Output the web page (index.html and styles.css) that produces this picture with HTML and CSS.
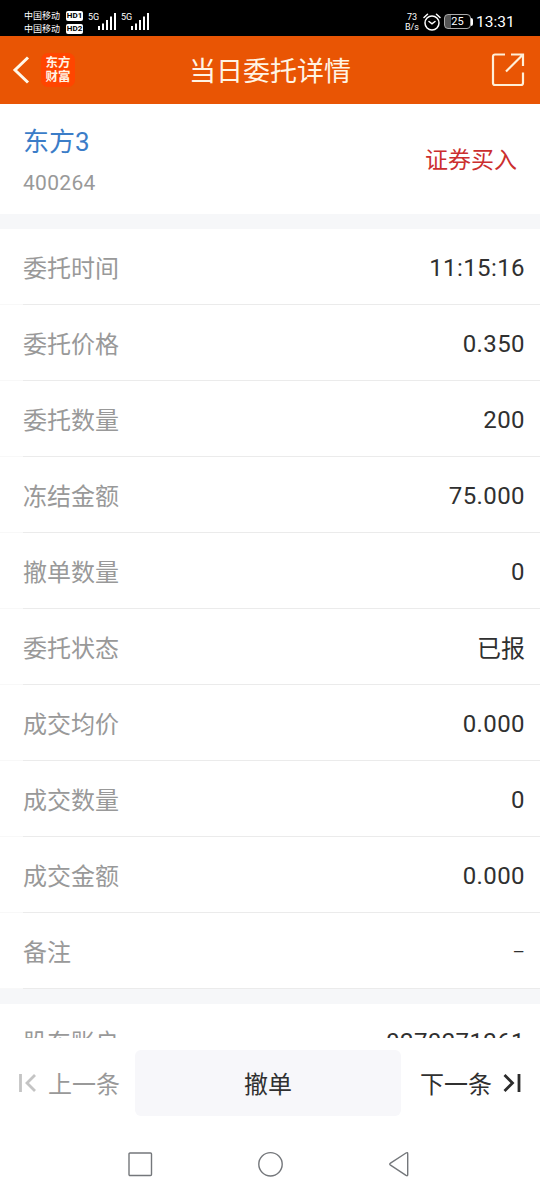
FILE: index.html
```html
<!DOCTYPE html>
<html lang="zh-CN">
<head>
    <meta charset="UTF-8">
    <meta name="viewport" content="width=device-width, initial-scale=1.0">
    <title>当日委托详情</title>
    <link rel="stylesheet" href="styles.css">
</head>
<body>

<div class="status-bar">
    <div class="carriers">
        <div>中国移动</div>
        <div>中国移动</div>
    </div>
    <div class="hd">
        <span>HD1</span>
        <span>HD2</span>
    </div>
    <div class="signal">
        <span>5G</span>
        <svg width="18" height="19" viewBox="0 0 18 19" stroke="#fff" stroke-width="2">
            <path d="M1 18v-4M5 18v-6.500M9 18v-10M13 18v-13.500M17 18V1"/>
        </svg>
    </div>
    <div class="signal">
        <span>5G</span>
        <svg width="18" height="19" viewBox="0 0 18 19" stroke="#fff" stroke-width="2">
            <path d="M1 18v-4M5 18v-6.500M9 18v-10M13 18v-13.500M17 18V1"/>
        </svg>
    </div>
    <div class="status-right">
        <div class="speed"><div>73</div><div>B/s</div></div>
        <svg class="alarm" width="18" height="18" viewBox="0 0 18 18" fill="none" stroke="#fff" stroke-width="1.500" stroke-linecap="round">
            <circle cx="9" cy="10" r="7"/>
            <path d="M1 4.500L4.500 1.300M17 4.500L13.500 1.300M6 8.500L9 10.800L12 8.500"/>
        </svg>
        <div class="battery"><span>25</span></div>
        <div class="clock">13:31</div>
    </div>
</div>

<header class="header">
    <svg class="back" width="18" height="28" viewBox="0 0 18 28" fill="none" stroke="#fff8ea" stroke-width="3">
        <path d="M16 1.500L3 14L16 26.500"/>
    </svg>
    <div class="logo"><div>东方</div><div>财富</div></div>
    <h1>当日委托详情</h1>
    <svg class="share" width="34" height="34" viewBox="0 0 34 34" fill="none" stroke="#ffefd8" stroke-width="2.200">
        <path d="M14 1.500H4a2 2 0 0 0-2 2V30a2 2 0 0 0 2 2H30a2 2 0 0 0 2-2V19.500M20 1.500H32V13M32 1.500L15 18.500"/>
    </svg>
</header>

<section class="stock">
    <div>
        <div class="stock-name">东方3</div>
        <div class="stock-code">400264</div>
    </div>
    <div class="side">证券买入</div>
</section>

<main class="details">
    <div class="row"><span>委托时间</span><b>11:15:16</b></div>
    <div class="row"><span>委托价格</span><b>0.350</b></div>
    <div class="row"><span>委托数量</span><b>200</b></div>
    <div class="row"><span>冻结金额</span><b>75.000</b></div>
    <div class="row"><span>撤单数量</span><b>0</b></div>
    <div class="row"><span>委托状态</span><b class="text">已报</b></div>
    <div class="row"><span>成交均价</span><b>0.000</b></div>
    <div class="row"><span>成交数量</span><b>0</b></div>
    <div class="row"><span>成交金额</span><b>0.000</b></div>
    <div class="row"><span>备注</span><b class="dash">–</b></div>
    <div class="gap"></div>
    <div class="row account"><span>股东账户</span><b>0270271261</b></div>
</main>

<footer class="actions">
    <div class="prev">
        <svg width="18" height="18" viewBox="0 0 18 18" fill="none" stroke="#c4c4c4" stroke-width="2.800">
            <path d="M1.500 0V18M16 1L8 9L16 17"/>
        </svg>
        <span>上一条</span>
    </div>
    <button class="cancel">撤单</button>
    <div class="next">
        <span>下一条</span>
        <svg width="18" height="18" viewBox="0 0 18 18" fill="none" stroke="#2c2c2c" stroke-width="2.800">
            <path d="M16 0V18M1.500 1L9.500 9L1.500 17"/>
        </svg>
    </div>
</footer>

<nav class="nav">
    <svg width="26" height="26" viewBox="0 0 26 26"><rect x="2" y="2" width="22.500" height="22.500" rx="1"/></svg>
    <svg width="26" height="26" viewBox="0 0 26 26"><circle cx="13.500" cy="13.300" r="11.700"/></svg>
    <svg width="26" height="26" viewBox="0 0 26 26"><path d="M3.500 12.200L19 2Q20.700 1 20.700 2.700V23.700Q20.700 25.400 19 24.400L3.500 14.200Q2 13.200 3.500 12.200Z"/></svg>
</nav>

</body>
</html>
```
FILE: styles.css
```css
* {box-sizing: border-box; margin: 0; padding: 0;}
body {
    font-family: Roboto, "Noto Sans CJK SC", sans-serif;
    background: #fff;
    color: #303030;
    width: 540px;
    height: 1200px;
    overflow: hidden;
    display: flex;
    flex-direction: column;
}

svg {
    display: block;
    flex: none;
}

.status-bar {
    height: 36px;
    flex: none;
    background: #000;
    color: #fff;
    display: flex;
    align-items: flex-start;
    padding: 0 24px;
}

.carriers {
    padding-top: 10px;
    width: 36px;
    font-size: 9px;
    line-height: 13px;
    white-space: nowrap;
}

.hd {
    display: flex;
    flex-direction: column;
    gap: 3px;
    margin: 11px 0 0 6px;
}

.hd span {
    width: 17px;
    height: 10px;
    background: #fff;
    border-radius: 2px;
    color: #000;
    font-size: 8px;
    font-weight: 700;
    line-height: 10px;
    text-align: center;
}

.signal {
    display: flex;
    align-items: flex-start;
    width: 28px;
    margin: 12px 0 0 5px;
    font-size: 9px;
    line-height: 10px;
}

.signal span {
    width: 10px;
}

.status-right {
    display: flex;
    margin-left: auto;
}

.speed {
    margin-top: 12px;
    width: 14px;
    font-size: 9px;
    line-height: 10px;
    text-align: center;
}

.alarm {
    margin: 13px 0 0 4px;
}

.battery {
    display: flex;
    align-items: center;
    margin: 14px 0 0 3px;
    height: 15px;
}

.battery span {
    width: 27px;
    height: 15px;
    border: 1.5px solid #aaa;
    border-radius: 4px;
    background: linear-gradient(to right, #555 25%, #000 25%);
    font-size: 11px;
    line-height: 14px;
    text-align: center;
}

.battery::after {
    content: "";
    width: 2px;
    height: 8px;
    background: #fff;
    border-radius: 0 2px 2px 0;
}

.clock {
    margin: 12px 0 0 3px;
    width: 40px;
    font-size: 15.5px;
    line-height: 21px;
    white-space: nowrap;
}

.header {
    height: 68px;
    flex: none;
    background: #e95504;
    display: flex;
    align-items: center;
    padding: 0 15px 0 12px;
}

.logo {
    width: 34px;
    height: 34px;
    margin-left: 11px;
    padding-top: 3px;
    border-radius: 7px;
    background: #ff4500;
    color: #fff3e4;
    font-size: 12.5px;
    font-weight: 700;
    line-height: 14px;
    text-align: center;
}

h1 {
    flex: 1;
    padding: 0 26px 2px 0;
    color: #fff4e4;
    font-size: 27px;
    font-weight: 400;
    text-align: center;
}

.stock {
    height: 125px;
    flex: none;
    display: flex;
    justify-content: space-between;
    padding: 19px 23px 0 23px;
    border-bottom: 15px solid #f6f7f9;
}

.stock-name {
    color: #3b7dc8;
    font-size: 26px;
    line-height: 38px;
}

.stock-code {
    margin-top: 7px;
    color: #999;
    font-size: 21px;
    line-height: 30px;
    letter-spacing: .3px;
}

.side {
    margin-top: 22px;
    color: #cb2e2e;
    font-size: 23px;
    line-height: 32px;
}

.details {
    height: 809px;
    flex: none;
    overflow: hidden;
}

.row {
    height: 76px;
    display: flex;
    justify-content: space-between;
    align-items: center;
    padding: 2px 15px 0 23px;
    background: linear-gradient(to right, #f8f8f8 23px, #ebebeb 23px) bottom / 100% 1px no-repeat;
    font-size: 24px;
    line-height: 36px;
}

.row span, .row .text {
    padding-top: 1px;
}

.row span {
    color: #999;
}

.row b {
    font-weight: 400;
    letter-spacing: .4px;
}

.row .text {
    letter-spacing: 0;
}

.row .dash {
    font-size: 19px;
    letter-spacing: 0;
}

.row.account {
    height: 74px;
}

.gap {
    height: 15px;
    background: #f6f7f9;
}

.actions {
    height: 90px;
    flex: none;
    display: flex;
    align-items: center;
    padding: 0 19px;
    font-size: 24px;
}

.prev, .next {
    display: flex;
    align-items: center;
    gap: 11px;
}

.prev span, .next span {
    padding-bottom: 2px;
}

.prev {
    width: 116px;
    color: #999;
}

.cancel {
    width: 266px;
    height: 66px;
    padding-bottom: 2px;
    border: none;
    border-radius: 6px;
    background: #f7f7fa;
    color: #303030;
    font: inherit;
}

.next {
    margin-left: auto;
}

.nav {
    flex: 1;
    display: flex;
    justify-content: center;
    gap: 104px;
    padding-top: 23px;
}

.nav svg {
    fill: none;
    stroke: #74777b;
    stroke-width: 1.4;
}
```
